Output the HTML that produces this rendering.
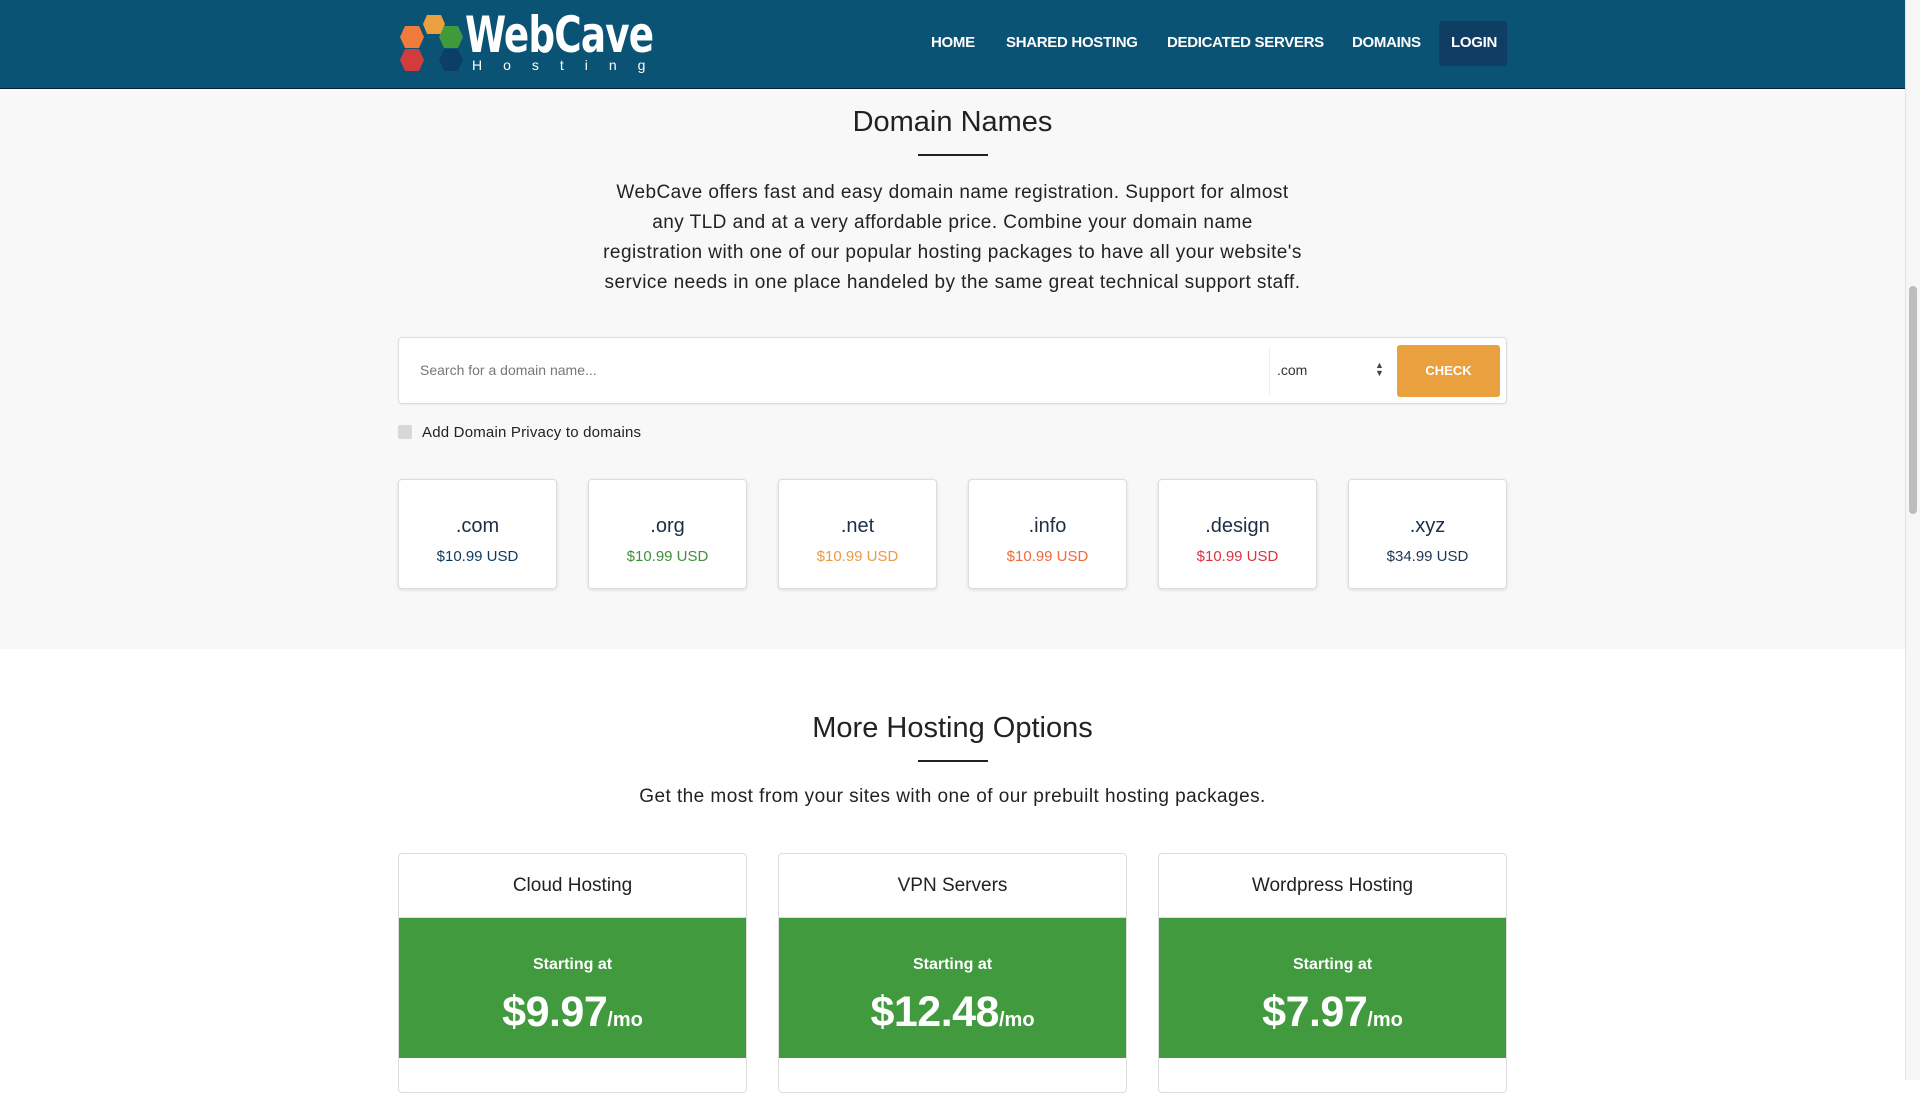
<!DOCTYPE html>
<html><head><meta charset="utf-8"><style>
*{margin:0;padding:0;box-sizing:border-box}
body{width:1920px;height:1080px;overflow:hidden;background:#fff;font-family:"Liberation Sans",sans-serif;color:#222;position:relative}
.hdr{position:absolute;left:0;top:0;width:1905px;height:89px;background:#0b5374;border-bottom:1px solid #0a2030}
.nav a{position:absolute;top:34px;color:#fff;font-weight:bold;font-size:15px;text-decoration:none;letter-spacing:-0.3px;white-space:nowrap}
.login{position:absolute;left:1439px;top:21px;width:68px;height:45px;background:#0f3d63;border-radius:3px}
.gray{position:absolute;left:0;top:89px;width:1905px;height:560px;background:#f8f8f8}
.sb{position:absolute;left:1905px;top:0;width:15px;height:1080px;background:#f6f6f6;border-left:1px solid #e2e2e2}
.thumb{position:absolute;left:1909px;top:286px;width:8px;height:228px;background:#bdbdbd;border-radius:4px}
.c{position:absolute;text-align:center;white-space:nowrap}
h2{font-weight:normal;font-size:29px;color:#222}
.ul{position:absolute;height:2px;background:#222;width:70px;left:918px}
.search{position:absolute;left:398px;top:337px;width:1109px;height:67px;background:#fff;border:1px solid #ddd;border-radius:4px;box-shadow:0 1px 2px rgba(0,0,0,.05)}
.tile{position:absolute;top:479px;width:159px;height:110px;background:#fff;border:1px solid #ddd;border-radius:4px;box-shadow:0 1px 3px rgba(0,0,0,.12);text-align:center}
.tile .t{position:absolute;left:0;right:0;top:35px;font-size:20px;color:#1c2f45}
.tile .p{position:absolute;left:0;right:0;top:68px;font-size:15px}
.card{position:absolute;top:853px;width:349px;height:240px;background:#fff;border:1px solid #ddd;border-radius:4px;overflow:hidden}
.card .h{height:64px;text-align:center;line-height:64px;font-size:19px;color:#222;border-bottom:1px solid #ddd}
.card .g{height:140px;background:#419a3e;color:#fff;text-align:center}
.card .s{padding-top:38px;font-weight:bold;font-size:16px}
.card .pr{margin-top:14px;font-weight:bold;font-size:43px;letter-spacing:-0.5px}
.card .pr span{font-size:20px;letter-spacing:0}
</style></head><body>
<div class="hdr">
<svg style="position:absolute;left:398px;top:12px" width="72" height="62" viewBox="0 0 72 62">
<polygon points="29,3 43,3 47,12 43,22 29,22 25,12" fill="#eba03f"/>
<polygon points="7,14 21,14 26,25 21,36 7,36 2,25" fill="#f07c3b"/>
<polygon points="46,14 60,14 65,25 60,36 46,36 41,25" fill="#3f9a3c"/>
<polygon points="7,37 21,37 26,48 21,59 7,59 2,48" fill="#d13d3d"/>
<polygon points="46,37 60,37 65,48 60,59 46,59 41,48" fill="#0d3f66"/>
</svg>
<div style="position:absolute;left:465px;top:6px;color:#fff;font-size:50px;font-weight:bold;font-family:'DejaVu Sans Condensed','Liberation Sans Narrow',sans-serif;letter-spacing:-1px;transform:scaleX(.83);transform-origin:left">WebCave</div>
<div style="position:absolute;left:472px;top:57px;color:#fff;font-size:14px;letter-spacing:21px">Hosting</div>
<div class="login"></div>
<div class="nav"><a style="left:931px">HOME</a><a style="left:1006px">SHARED HOSTING</a><a style="left:1167px">DEDICATED SERVERS</a><a style="left:1352px">DOMAINS</a><a style="left:1451px">LOGIN</a></div>
</div>
<div class="gray"></div>
<div class="c" style="left:0;width:1905px;top:106px"><h2>Domain Names</h2></div>
<div class="ul" style="top:154px"></div>
<div class="c" style="left:0;width:1905px;top:178px;font-size:19px;line-height:30px;color:#222;letter-spacing:0.45px">WebCave offers fast and easy domain name registration. Support for almost<br>any TLD and at a very affordable price. Combine your domain name<br>registration with one of our popular hosting packages to have all your website's<br>service needs in one place handeled by the same great technical support staff.</div>
<div class="search">
<div style="position:absolute;left:21px;top:24px;font-size:14px;color:#777">Search for a domain name...</div>
<div style="position:absolute;left:870px;top:7px;width:118px;height:52px;border-left:1px solid #eee;border-radius:4px"></div>
<div style="position:absolute;left:878px;top:24px;font-size:14px;color:#333">.com</div>
<div style="position:absolute;left:976px;top:23px;font-size:9px;line-height:8px;color:#444">▲<br>▼</div>
<div style="position:absolute;left:998px;top:7px;width:103px;height:52px;background:#eba03f;border-radius:3px;color:#fff;font-weight:bold;font-size:13px;text-align:center;line-height:52px">CHECK</div>
</div>
<div style="position:absolute;left:398px;top:425px;width:14px;height:14px;background:#d8d8d8;border-radius:2px"></div>
<div style="position:absolute;left:422px;top:424px;font-size:15px;color:#222;letter-spacing:0.2px">Add Domain Privacy to domains</div>
<div class="tile" style="left:398px"><div class="t">.com</div><div class="p" style="color:#0b3a5e">$10.99 USD</div></div>
<div class="tile" style="left:588px"><div class="t">.org</div><div class="p" style="color:#3f8f3b">$10.99 USD</div></div>
<div class="tile" style="left:778px"><div class="t">.net</div><div class="p" style="color:#ec9a45">$10.99 USD</div></div>
<div class="tile" style="left:968px"><div class="t">.info</div><div class="p" style="color:#f06a3a">$10.99 USD</div></div>
<div class="tile" style="left:1158px"><div class="t">.design</div><div class="p" style="color:#d73440">$10.99 USD</div></div>
<div class="tile" style="left:1348px"><div class="t">.xyz</div><div class="p" style="color:#1c3550">$34.99 USD</div></div>
<div class="c" style="left:0;width:1905px;top:712px"><h2>More Hosting Options</h2></div>
<div class="ul" style="top:760px"></div>
<div class="c" style="left:0;width:1905px;top:786px;font-size:19px;color:#222;letter-spacing:0.45px">Get the most from your sites with one of our prebuilt hosting packages.</div>
<div class="card" style="left:398px"><div class="h">Cloud Hosting</div><div class="g"><div class="s">Starting at</div><div class="pr">$9.97<span>/mo</span></div></div></div>
<div class="card" style="left:778px"><div class="h">VPN Servers</div><div class="g"><div class="s">Starting at</div><div class="pr">$12.48<span>/mo</span></div></div></div>
<div class="card" style="left:1158px"><div class="h">Wordpress Hosting</div><div class="g"><div class="s">Starting at</div><div class="pr">$7.97<span>/mo</span></div></div></div>
<div class="sb"></div><div class="thumb"></div>
</body></html>
